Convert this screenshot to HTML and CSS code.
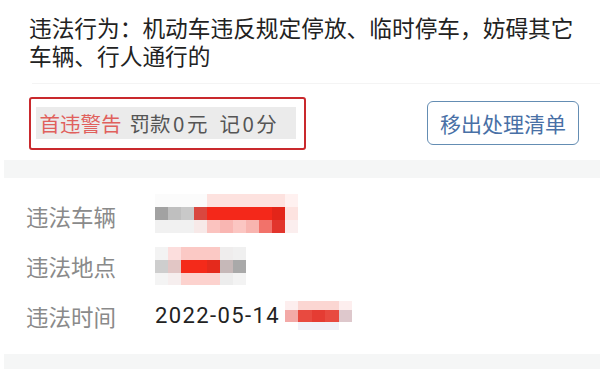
FILE: index.html
```html
<!DOCTYPE html>
<html lang="zh-CN">
<head>
<meta charset="utf-8">
<link rel="stylesheet" href="styles.css">
</head>
<body>
<div class="page">
  <div class="title">违法行为：机动车违反规定停放、临时停车，妨碍其它车辆、行人通行的</div>
  <div class="divider"></div>
  <div class="actions">
    <div class="fine-frame">
      <div class="fine"><span class="warn">首违警告</span><span class="fine-item">罚款<span class="num">0</span>元</span><span class="fine-item fine-points">记<span class="num">0</span>分</span></div>
    </div>
    <button class="remove-btn">移出处理清单</button>
  </div>
  <div class="band"></div>
  <div class="details">
    <div class="row">
      <span class="label">违法车辆</span>
      <div class="mosaic m1"><div class="r1"></div><div class="r2"></div><div class="r3"></div></div>
    </div>
    <div class="row">
      <span class="label">违法地点</span>
      <div class="mosaic m2"><div class="r1"></div><div class="r2"></div><div class="r3"></div></div>
    </div>
    <div class="row">
      <span class="label">违法时间</span>
      <span class="date">2022-05-14</span>
      <div class="mosaic m3"><div class="r1"></div><div class="r2"></div><div class="r3"></div></div>
    </div>
  </div>
  <div class="band band-bottom"></div>
</div>
</body>
</html>
```

FILE: styles.css
```css
html, body {
  margin: 0;
  padding: 0;
  background: #ffffff;
}
.page {
  width: 600px;
  height: 370px;
  overflow: hidden;
  font-family: "Noto Sans CJK SC", "Noto Sans", sans-serif;
}
.title {
  padding: 13.5px 20px 0 29px;
  font-size: 22.7px;
  line-height: 28px;
  color: #222222;
}
.divider {
  margin: 13px 0 0 32px;
  height: 1px;
  background: #f4f4f4;
}
.actions {
  display: flex;
  align-items: center;
  justify-content: space-between;
  padding: 13px 21px 10px 29px;
}
.fine-frame {
  border: 2.5px solid #c9292d;
  border-radius: 3px;
  padding: 8.5px 8.5px 8.5px 4.5px;
}
.fine {
  box-sizing: border-box;
  width: 260px;
  height: 32px;
  padding-left: 4px;
  background: #ebebeb;
  font-size: 20.5px;
  line-height: 32px;
  color: #555555;
  white-space: nowrap;
}
.warn {
  color: #e0605c;
}
.fine-item {
  margin-left: 8px;
}
.fine-points {
  margin-left: 12px;
}
.num {
  margin: 0 2.5px;
}
.remove-btn {
  box-sizing: border-box;
  width: 152px;
  height: 44px;
  margin: 0;
  padding: 0;
  border: 1.7px solid #648db3;
  border-radius: 6px;
  background: #ffffff;
  font-family: "Noto Sans CJK SC", "Noto Sans", sans-serif;
  font-size: 21px;
  color: #4870a6;
}
.band {
  margin-left: 4px;
  height: 18px;
  background: #f5f6f6;
}
.details {
  padding: 13px 0 13px 26px;
}
.row {
  display: flex;
  align-items: center;
  height: 50px;
}
.label {
  width: 129px;
  font-size: 22.5px;
  color: #8a8a8a;
}
.date {
  font-family: Roboto, "Liberation Sans", sans-serif;
  font-size: 22px;
  letter-spacing: 1.4px;
  color: #222222;
}
.mosaic {
  display: flex;
  flex-direction: column;
}
.m1 { width: 143px; margin-bottom: 5px; }
.m1 div { height: 13px; }
.m1 .r1 {
  background: linear-gradient(90deg, #fbfbfb 0 52px, #fde2df 52px 130px, #fff1f0 130px 143px);
}
.m1 .r2 {
  background: linear-gradient(90deg, #a2a2a2 0 13px, #bfbfbf 13px 26px, #c9c9c9 26px 39px, #d9473f 39px 52px, #f4281a 52px 117px, #e32519 117px 130px, #fde3e0 130px 143px);
}
.m1 .r3 {
  background: linear-gradient(90deg, #f1f1f1 0 39px, #f7e9e8 39px 52px, #fbc3bf 52px 65px, #f9b6b2 65px 78px, #fbc6c2 78px 91px, #f8b4af 91px 104px, #f2726a 104px 117px, #e2352c 117px 130px, #fbeeee 130px 143px);
}
.m2 { width: 91px; }
.m2 .r1 { height: 13px; background: linear-gradient(90deg, #f3f3f3 0 13px, #fcdedd 13px 26px, #fbc9c5 26px 65px, #efeded 65px 78px, #f0f0f0 78px 91px); }
.m2 .r2 { height: 13px; background: linear-gradient(90deg, #cecece 0 13px, #e2c6c5 13px 26px, #f42a1a 26px 52px, #e42a1c 52px 65px, #c6b8b8 65px 78px, #a9a9a9 78px 91px); }
.m2 .r3 { height: 12px; background: linear-gradient(90deg, #f4f4f4 0 13px, #f6eeee 13px 26px, #fcd2ce 26px 65px, #ededed 65px 78px, #f3f3f3 78px 91px); }
.m3 { width: 67px; margin-left: 5px; }
.m3 .r1 { height: 9px; background: linear-gradient(90deg, #fdeeee 0 13px, #fbd6d2 13px 54px, #fdeeee 54px 67px); }
.m3 .r2 { height: 12px; background: linear-gradient(90deg, #f3a9a7 0 13px, #e84a40 13px 27px, #e53c33 27px 40px, #e84a40 40px 54px, #dec8cc 54px 67px); }
.m3 .r3 { height: 8px; background: linear-gradient(90deg, #ffffff 0 13px, #f1f1f8 13px 54px, #ffffff 54px 67px); }
.band-bottom {
  height: 15px;
}
```
